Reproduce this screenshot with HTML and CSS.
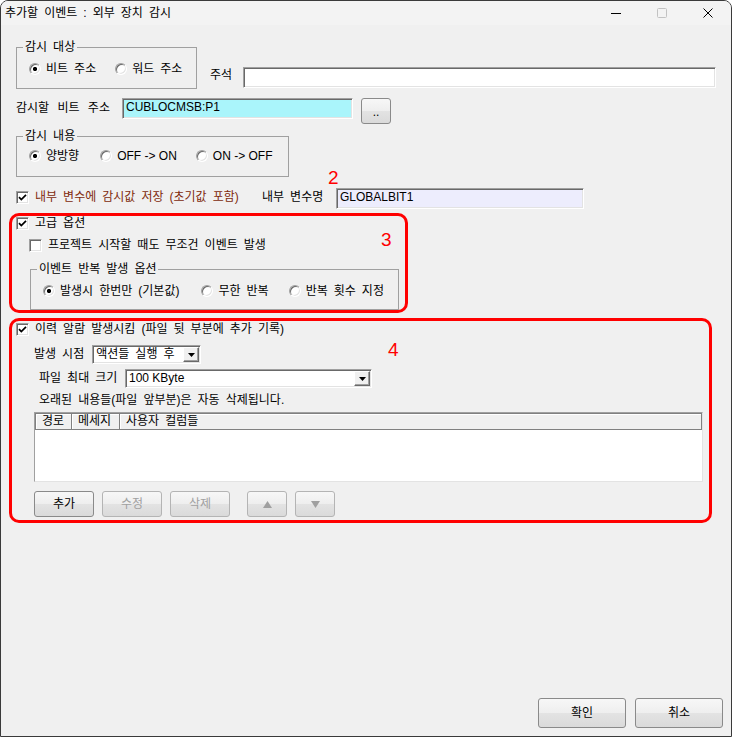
FILE: index.html
```html
<!DOCTYPE html>
<html lang="ko">
<head>
<meta charset="utf-8">
<title>추가할 이벤트 : 외부 장치 감시</title>
<link rel="stylesheet" href="styles.css">
</head>
<body>
<div class="window">
  <div class="titlebar">
    <span class="title">추가할 이벤트 : 외부 장치 감시</span>
    <div class="caption">
      <span class="cap"><svg width="10" height="10" viewBox="0 0 10 10"><path d="M0 5.5H10" stroke="#000" stroke-width="1"/></svg></span>
      <span class="cap"><svg width="10" height="10" viewBox="0 0 10 10"><rect x="0.5" y="0.5" width="9" height="9" rx="1" fill="none" stroke="#c2c2c2" stroke-width="1"/></svg></span>
      <span class="cap"><svg width="10" height="10" viewBox="0 0 10 10"><path d="M0.5 0.5L9.5 9.5M9.5 0.5L0.5 9.5" stroke="#000" stroke-width="1"/></svg></span>
    </div>
  </div>

  <div class="client">
    <div class="row r1">
      <fieldset class="group g1">
        <legend>감시 대상</legend>
        <div class="radios">
          <span class="radio first"><span class="rb on"></span>비트 주소</span>
          <span class="radio g1b"><span class="rb"></span>워드 주소</span>
        </div>
      </fieldset>
      <span class="note-label">주석</span>
      <div class="field note"></div>
    </div>

    <div class="row r2">
      <span class="addr-label">감시할 비트 주소</span>
      <div class="field cyan"><span class="lat">CUBLOCMSB:P1</span></div>
      <div class="btn dots">..</div>
    </div>

    <fieldset class="group g2">
      <legend>감시 내용</legend>
      <div class="radios">
        <span class="radio first"><span class="rb on"></span>양방향</span>
        <span class="radio g2b"><span class="rb"></span><span class="lat">OFF -&gt; ON</span></span>
        <span class="radio g2c"><span class="rb"></span><span class="lat">ON -&gt; OFF</span></span>
      </div>
    </fieldset>

    <div class="row r4">
      <span class="anno a2">2</span>
      <div class="check w246"><span class="cb"><svg width="9" height="9" viewBox="0 0 9 9"><path d="M1 4.2L3.3 6.6L8 1.8" fill="none" stroke="#000" stroke-width="1.7"/></svg></span><span class="brown">내부 변수에 감시값 저장 (초기값 포함)</span></div>
      <span class="var-label">내부 변수명</span>
      <div class="field lav"><span class="lat">GLOBALBIT1</span></div>
    </div>

    <div class="mark m3">
      <span class="anno a3">3</span>
      <div class="check ca"><span class="cb"><svg width="9" height="9" viewBox="0 0 9 9"><path d="M1 4.2L3.3 6.6L8 1.8" fill="none" stroke="#000" stroke-width="1.7"/></svg></span><span>고급 옵션</span></div>
      <div class="check cbx"><span class="cb"></span><span>프로젝트 시작할 때도 무조건 이벤트 발생</span></div>
      <fieldset class="group g3">
        <legend>이벤트 반복 발생 옵션</legend>
        <div class="radios">
          <span class="radio first"><span class="rb on"></span>발생시 한번만 (기본값)</span>
          <span class="radio g3b"><span class="rb"></span>무한 반복</span>
          <span class="radio g3c"><span class="rb"></span>반복 횟수 지정</span>
        </div>
      </fieldset>
    </div>

    <div class="mark m4">
      <span class="anno a4">4</span>
      <div class="check ca"><span class="cb"><svg width="9" height="9" viewBox="0 0 9 9"><path d="M1 4.2L3.3 6.6L8 1.8" fill="none" stroke="#000" stroke-width="1.7"/></svg></span><span>이력 알람 발생시킴 (파일 뒷 부분에 추가 기록)</span></div>
      <div class="row rd">
        <span class="when-label">발생 시점</span>
        <div class="combo cw"><span class="combo-text">액션들 실행 후</span><span class="drop"><svg width="7" height="4" viewBox="0 0 7 4"><path d="M0 0H7L3.5 4Z" fill="#000"/></svg></span></div>
      </div>
      <div class="row re">
        <span class="size-label">파일 최대 크기</span>
        <div class="combo cs"><span class="combo-text"><span class="lat">100 KByte</span></span><span class="drop"><svg width="7" height="4" viewBox="0 0 7 4"><path d="M0 0H7L3.5 4Z" fill="#000"/></svg></span></div>
      </div>
      <div class="info">오래된 내용들(파일 앞부분)은 자동 삭제됩니다.</div>
      <div class="lv">
        <div class="lv-head">
          <span class="lv-col c1">경로</span>
          <span class="lv-col c2">메세지</span>
          <span class="lv-col c3">사용자 컬럼들</span>
        </div>
      </div>
      <div class="row btns">
        <div class="btn sm">추가</div>
        <div class="btn sm dis b2">수정</div>
        <div class="btn sm dis b2">삭제</div>
        <div class="btn arrow dis b-up"><svg width="9" height="7" viewBox="0 0 9 7"><path d="M4.5 0L9 7H0Z" fill="#a0a0a0"/></svg></div>
        <div class="btn arrow dis b-dn"><svg width="9" height="7" viewBox="0 0 9 7"><path d="M0 0H9L4.5 7Z" fill="#a0a0a0"/></svg></div>
      </div>
    </div>

    <div class="footer">
      <div class="btn lg">확인</div>
      <div class="btn lg">취소</div>
    </div>
  </div>
</div>
</body>
</html>
```

FILE: styles.css
```css
* { box-sizing: border-box; }
html, body { margin: 0; padding: 0; background: #ffffff; }
body {
  font-family: "Liberation Sans", "Noto Sans CJK KR", sans-serif;
  font-size: 12px;
  line-height: 13px;
  color: #000;
  word-spacing: 2.7px;
}
.lat { font-size: 12px; word-spacing: 0; }

.window {
  width: 732px;
  height: 737px;
  border: 1px solid #3a3a3a;
  border-radius: 8px 8px 0 0;
  overflow: hidden;
  background: #f0f0f0;
  display: flex;
  flex-direction: column;
}
.titlebar {
  flex: none;
  height: 24px;
  background: #f3f3f3;
  display: flex;
  align-items: center;
  padding-left: 4px;
  line-height: 24px;
}
.title { flex: 1; }
.caption { display: flex; }
.cap {
  width: 46px;
  height: 24px;
  display: flex;
  align-items: center;
  justify-content: center;
}

.client { flex: 1; display: flex; flex-direction: column; }
.row { display: flex; align-items: flex-start; }

/* group boxes */
.group {
  margin: 0;
  border: 1px solid #a0a0a0;
  min-width: 0;
}
.group > legend {
  padding: 0 2px;
  height: 13px;
  line-height: 13px;
}
.radios { display: flex; align-items: center; height: 14px; }
.radio { display: flex; align-items: center; gap: 5px; white-space: nowrap; }
.radio.first { margin-left: 6px; }
.rb {
  flex: none;
  width: 12px;
  height: 12px;
  border-radius: 50%;
  background: #fff;
  border: 1px solid;
  border-color: #a0a0a0 #ffffff #ffffff #a0a0a0;
  box-shadow: inset 1px 1px 0 #696969, inset -1px -1px 0 #e3e3e3;
}
.rb.on { background: radial-gradient(circle at center, #000 0 1.8px, #fff 2.4px); }

.cb {
  flex: none;
  width: 13px;
  height: 13px;
  background: #fff;
  border: 1px solid;
  border-color: #a0a0a0 #ffffff #ffffff #a0a0a0;
  box-shadow: inset 1px 1px 0 #696969, inset -1px -1px 0 #e3e3e3;
  display: flex;
  align-items: center;
  justify-content: center;
}
.check { display: flex; align-items: center; gap: 6px; height: 13px; white-space: nowrap; }

.field {
  height: 21px;
  border: 1px solid;
  border-color: #a0a0a0 #ffffff #ffffff #a0a0a0;
  box-shadow: inset 1px 1px 0 #696969, inset -1px -1px 0 #e3e3e3;
  background: #fff;
  padding: 2px 0 0 3px;
  line-height: 13px;
}

/* row 1 */
.r1 { margin: 16px 0 0 15px; }
.g1 { width: 181px; padding: 8px 0 12px 6px; }
.g1b { margin-left: 19px; }
.note-label { margin: 28px 0 0 13px; width: 22px; white-space: nowrap; }
.note { margin: 26px 0 0 11px; width: 473px; }

/* row 2 */
.r2 { margin: 9px 0 0 15px; }
.addr-label { width: 106px; margin-top: 4px; word-spacing: 5px; white-space: nowrap; }
.cyan { width: 231px; background: #aaf5fb; }
.btn {
  display: flex;
  align-items: center;
  justify-content: center;
  border: 1px solid #8a8a8a;
  border-radius: 3px;
  background: linear-gradient(#f7f7f7, #eeeeee 50%, #e3e3e3 50%, #dadada);
  white-space: nowrap;
}
.dots { width: 30px; height: 26px; margin-left: 8px; padding-top: 3px; }

/* group 2 */
.g2 { width: 273px; margin: 6px 0 0 15px; padding: 6px 0 13px 6px; }
.g2b { margin-left: 21px; }
.g2c { margin-left: 19px; }

/* row 4 */
.r4 { margin: 11px 0 0 15px; position: relative; }
.w246 { width: 246px; margin-top: 3px; }
.brown { color: #802a0c; }
.var-label { width: 74px; margin-top: 3px; white-space: nowrap; }
.lav { width: 248px; background: #ededfd; }

/* annotations */
.anno {
  position: absolute;
  color: #ff0000;
  font-family: "Liberation Sans", sans-serif;
  font-size: 19px;
  line-height: 19px;
  word-spacing: 0;
}
.a2 { left: 312px; top: -20px; }
.a3 { left: 369px; top: 14px; }
.a4 { left: 376px; top: 19px; }

.mark {
  position: relative;
  border: 3px solid #ff0000;
  border-radius: 10px;
}
.m3 { width: 399px; margin: 4px 0 0 8px; padding: 1px 0 0 0; }
.ca { margin-left: 4px; }
.cbx { margin: 9px 0 0 17px; }
.g3 { width: 369px; margin: 11px 0 0 18px; padding: 8px 0 11px 6px; }
.g3b { margin-left: 22px; }
.g3c { margin-left: 20px; }

.m4 { width: 703px; margin: 5px 0 0 8px; padding: 2px 0 3px 0; }
.rd { margin: 9px 0 0 22px; }
.when-label { margin-top: 3px; white-space: nowrap; }
.combo {
  height: 19px;
  border: 1px solid;
  border-color: #a0a0a0 #ffffff #ffffff #a0a0a0;
  box-shadow: inset 1px 1px 0 #696969, inset -1px -1px 0 #e3e3e3;
  background: #fff;
  display: flex;
  align-items: center;
  padding: 0 1px 0 3px;
}
.combo-text { flex: 1; white-space: nowrap; }
.drop {
  flex: none;
  width: 16px;
  height: 15px;
  background: #f0f0f0;
  border: 1px solid;
  border-color: #ffffff #696969 #696969 #ffffff;
  box-shadow: inset -1px -1px 0 #a0a0a0;
  display: flex;
  align-items: center;
  justify-content: center;
}
.cw { width: 109px; margin-left: 8px; }
.re { margin: 5px 0 0 27px; }
.size-label { width: 86px; margin-top: 3px; white-space: nowrap; }
.cs { width: 247px; margin-left: 0; }
.info { margin: 6px 0 0 27px; height: 13px; white-space: nowrap; }

.lv {
  width: 669px;
  height: 70px;
  margin: 5px 0 0 22px;
  background: #fff;
  border: 1px solid;
  border-color: #a0a0a0 #e3e3e3 #e3e3e3 #a0a0a0;
}
.lv-head {
  display: flex;
  height: 17px;
  background: #f0f0f0;
  border: 1px solid #808080;
}
.lv-col {
  border-right: 1px solid #808080;
  box-shadow: inset 1px 1px 0 #ffffff;
  padding-left: 6px;
  line-height: 15px;
  white-space: nowrap;
}
.c1 { width: 36px; }
.c2 { width: 48px; }
.c3 { flex: 1; border-right: none; }

.btns { margin: 9px 0 0 22px; }
.sm { width: 60px; height: 26px; }
.b2 { margin-left: 8px; }
.arrow { width: 40px; height: 26px; }
.b-up { margin-left: 17px; }
.b-dn { margin-left: 8px; }
.dis { color: #a0a0a0; border-color: #b4b4b4; }

.footer {
  margin-top: auto;
  display: flex;
  justify-content: flex-end;
  gap: 9px;
  padding: 0 8px 8px 0;
}
.lg { width: 88px; height: 30px; }
```
